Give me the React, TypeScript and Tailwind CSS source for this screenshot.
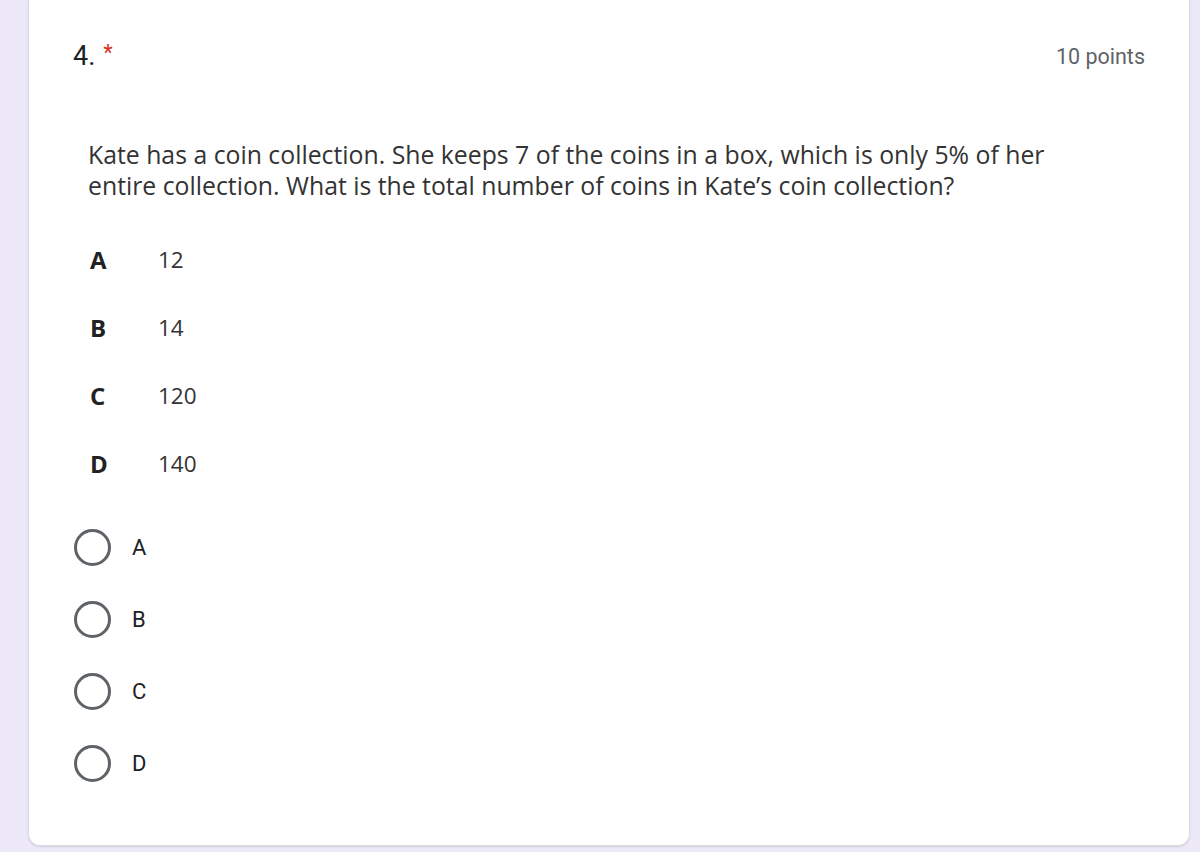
import React from "react";

const choices = [
  { letter: "A", value: "12" },
  { letter: "B", value: "14" },
  { letter: "C", value: "120" },
  { letter: "D", value: "140" },
];

export default function App() {
  return (
    <div className="h-[852px] w-[1200px] overflow-hidden bg-[#ede9f8] pl-[28px] pr-[10px]">
      <div className="h-[846px] rounded-b-[12px] border border-t-0 border-[#dadce0] bg-white shadow-[0_1px_2px_rgba(60,64,67,0.15)]">
        {/* header */}
        <div className="flex items-start justify-between pl-[44px] pr-[44px] pt-[40px]" style={{ fontFamily: "Roboto, sans-serif" }}>
          <div className="flex items-start">
            <span className="text-[27px] leading-[32px] text-[#202124]">4.</span>
            <span className="ml-[8px] mt-[-2px] text-[22px] leading-[30px] text-[#d93025]">*</span>
          </div>
          <span className="mt-[3px] text-[21.5px] leading-[28px] text-[#5f6368]">10 points</span>
        </div>

        {/* question image content */}
        <div className="pl-[59px] pt-[67px]" style={{ fontFamily: "'Open Sans', sans-serif" }}>
          <p className="text-[24.8px] leading-[31px] text-[#333]">
            Kate has a coin collection. She keeps 7 of the coins in a box, which is only 5% of her
            <br />
            entire collection. What is the total number of coins in Kate’s coin collection?
          </p>
          <div className="mt-[25px] flex flex-col">
            {choices.map((c) => (
              <div key={c.letter} className="flex h-[68px] items-center">
                <span className="w-[70px] pl-[2px] text-[24px] font-bold text-[#222]">{c.letter}</span>
                <span className="text-[22.5px] text-[#333]">{c.value}</span>
              </div>
            ))}
          </div>
        </div>

        {/* radios */}
        <div className="mt-[13px] flex flex-col pl-[45px]" style={{ fontFamily: "Roboto, sans-serif" }}>
          {choices.map((c) => (
            <div key={c.letter} className="flex h-[72px] items-center">
              <span className="h-[37px] w-[37px] rounded-full border-[3px] border-[#5f6368]" />
              <span className="ml-[21px] text-[22px] text-[#202124]">{c.letter}</span>
            </div>
          ))}
        </div>
      </div>
    </div>
  );
}
